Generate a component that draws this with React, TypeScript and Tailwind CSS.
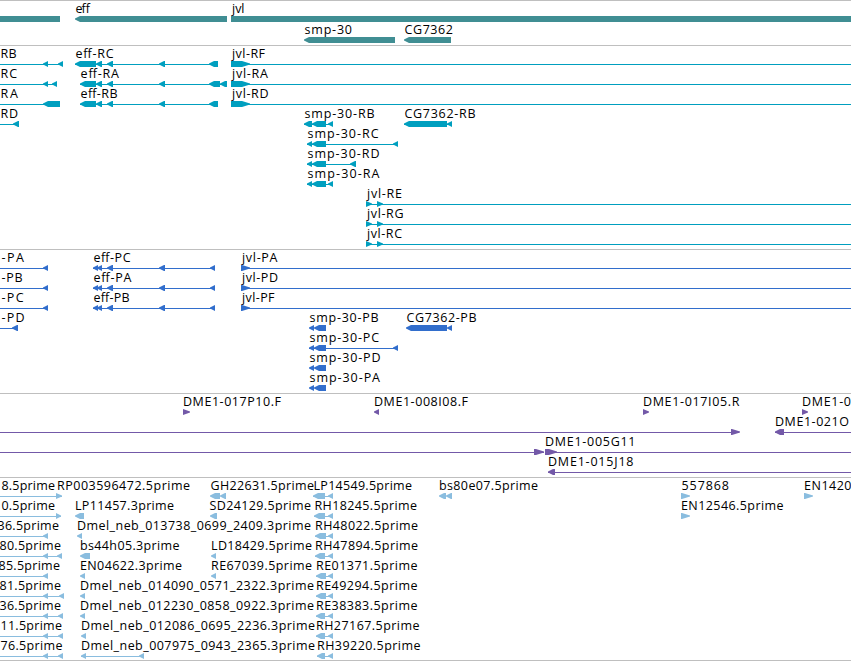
type Dir = 'l' | 'r' | '-';
type Block = [from: number, to: number, dir: Dir];
// x and end bound the drawn text
type Label = [text: string, x: number, end: number];

interface Row {
  labels: Label[];
  lines?: [number, number][];
  blocks: Block[];
}

interface Track {
  name: string;
  color: string;
  className: string;
  rowHeight: number;
  rows: Row[];
}

const WIDTH = 851;

const genes: Row[] = [
  {
    labels: [['eff', 75, 90], ['jvl', 231.5, 244.5]],
    blocks: [[0, 60, '-'], [75, 227, 'l'], [231, 851, '-']],
  },
  {
    labels: [['smp-30', 304, 352], ['CG7362', 404, 453]],
    blocks: [[304, 395, 'l'], [404, 451, 'l']],
  },
];

const effTail: Block[] = [[96, 102, 'l'], [107, 113, 'l'], [159, 165, 'l']];

const transcripts: Row[] = [
  {
    labels: [['RB', 0, 16.5], ['eff-RC', 75, 113.5], ['jvl-RF', 231.5, 265]],
    lines: [[0, 63], [75, 218], [231, WIDTH]],
    blocks: [[43, 48, 'l'], [58, 63, 'l'], [75, 96, 'l'], ...effTail, [209, 218, 'l'], [231, 250, 'r']],
  },
  {
    labels: [['RC', 0, 17], ['eff-RA', 80, 119], ['jvl-RA', 231.5, 268]],
    lines: [[0, 57], [80, 227], [231, WIDTH]],
    blocks: [[43, 48, 'l'], [52, 57, 'l'], [80, 96, 'l'], ...effTail, [209, 220, 'l'], [220, 227, 'l'], [231, 250, 'r']],
  },
  {
    labels: [['RA', 0, 18], ['eff-RB', 80, 117.5], ['jvl-RD', 231.5, 268.5]],
    lines: [[0, 60], [80, 218], [231, WIDTH]],
    blocks: [[43, 60, 'l'], [80, 96, 'l'], ...effTail, [209, 218, 'l'], [231, 250, 'r']],
  },
  {
    labels: [['RD', 0, 18], ['smp-30-RB', 304, 374.5], ['CG7362-RB', 404, 475.5]],
    lines: [[0, 19], [304, 333], [404, 452]],
    blocks: [[13, 19, 'l'], [304, 312, 'l'], [312, 326, 'l'], [328, 333, 'l'], [404, 447, 'l'], [447, 452, 'l']],
  },
  {
    labels: [['smp-30-RC', 307, 378.5]],
    lines: [[307, 398]],
    blocks: [[307, 312, 'l'], [312, 326, 'l'], [393, 398, 'l']],
  },
  {
    labels: [['smp-30-RD', 307, 379.5]],
    lines: [[307, 356]],
    blocks: [[307, 312, 'l'], [312, 326, 'l'], [350, 356, 'l']],
  },
  {
    labels: [['smp-30-RA', 307, 379.5]],
    lines: [[307, 333]],
    blocks: [[307, 312, 'l'], [312, 326, 'l'], [328, 333, 'l']],
  },
  { labels: [['jvl-RE', 366.5, 402]], lines: [[366, WIDTH]], blocks: [[366, 372, 'r'], [377, 383, 'r']] },
  { labels: [['jvl-RG', 366.5, 403.5]], lines: [[366, WIDTH]], blocks: [[366, 372, 'r'], [377, 383, 'r']] },
  { labels: [['jvl-RC', 366.5, 402]], lines: [[366, WIDTH]], blocks: [[366, 372, 'r'], [377, 383, 'r']] },
];

const effProtein: Block[] = [[93, 98, 'l'], [97, 102, 'l'], [107, 113, 'l'], [159, 165, 'l'], [210, 215, 'l']];
const smpProtein: Block[] = [[309, 314, 'l'], [314, 326, 'l']];

const proteins: Row[] = [
  {
    labels: [['-PA', 1, 24], ['eff-PC', 93, 130.5], ['jvl-PA', 241.5, 277.5]],
    lines: [[0, 48], [93, 215], [241, WIDTH]],
    blocks: [[43, 48, 'l'], ...effProtein, [241, 250, 'r']],
  },
  {
    labels: [['-PB', 1, 22.5], ['eff-PA', 93, 131.5], ['jvl-PD', 241.5, 278]],
    lines: [[0, 48], [93, 215], [241, WIDTH]],
    blocks: [[43, 48, 'l'], ...effProtein, [241, 250, 'r']],
  },
  {
    labels: [['-PC', 1, 23.5], ['eff-PB', 93, 129.5], ['jvl-PF', 241.5, 274.5]],
    lines: [[0, 48], [93, 215], [241, WIDTH]],
    blocks: [[43, 48, 'l'], ...effProtein, [241, 250, 'r']],
  },
  {
    labels: [['-PD', 1, 24.5], ['smp-30-PB', 309, 378.5], ['CG7362-PB', 406, 476.5]],
    lines: [[0, 18]],
    blocks: [[12, 18, 'l'], ...smpProtein, [406, 447, 'l'], [447, 452, 'l']],
  },
  { labels: [['smp-30-PC', 309, 379]], lines: [[309, 398]], blocks: [...smpProtein, [393, 398, 'l']] },
  { labels: [['smp-30-PD', 309, 380.5]], blocks: smpProtein },
  { labels: [['smp-30-PA', 309, 380]], blocks: smpProtein },
];

const clones: Row[] = [
  {
    labels: [['DME1-017P10.F', 182.5, 281], ['DME1-008I08.F', 373.5, 468], ['DME1-017I05.R', 642.5, 739.5], ['DME1-0', 801.5, 851]],
    blocks: [[183, 190, 'r'], [374, 379, 'l'], [643, 649, 'r'], [802, 808, 'r']],
  },
  {
    labels: [['DME1-021O', 774.5, 849]],
    lines: [[0, 739], [775, WIDTH]],
    blocks: [[731, 740, 'r'], [775, 784, 'l']],
  },
  {
    labels: [['DME1-005G11', 544.5, 635.5]],
    lines: [[0, 544], [545, WIDTH]],
    blocks: [[534, 544, 'r'], [545, 557, 'r']],
  },
  { labels: [['DME1-015J18', 547.5, 633.5]], lines: [[548, WIDTH]], blocks: [[548, 555, 'l']] },
];

const ests: Row[] = [
  {
    labels: [
      ['8.5prime', 1, 55], ['RP003596472.5prime', 56.5, 190], ['GH22631.5prime', 210, 314],
      ['LP14549.5prime', 313, 412], ['bs80e07.5prime', 438.5, 538], ['557868', 681, 729], ['EN1420', 803.5, 851.5],
    ],
    lines: [[0, 62], [313, 333]],
    blocks: [
      [56, 62, 'r'], [210, 220, 'l'], [220, 226, 'l'], [313, 325, 'l'], [328, 333, 'l'],
      [439, 446, 'l'], [446, 452, 'l'], [681, 690, 'r'], [804, 813, 'r'],
    ],
  },
  {
    labels: [['0.5prime', 1, 55], ['LP11457.3prime', 74.5, 174], ['SD24129.5prime', 209, 311], ['RH18245.5prime', 314, 417], ['EN12546.5prime', 680.5, 783.5]],
    lines: [[0, 61], [314, 333]],
    blocks: [[56, 61, 'r'], [75, 84, 'l'], [210, 217, 'l'], [314, 325, 'l'], [328, 333, 'l'], [681, 690, 'r']],
  },
  {
    labels: [['36.5prime', -3, 59], ['Dmel_neb_013738_0699_2409.3prime', 76.5, 311], ['RH48022.5prime', 314.5, 418]],
    lines: [[0, 48], [315, 333]],
    blocks: [[43, 48, 'l'], [77, 82, 'l'], [315, 326, 'l'], [328, 333, 'l']],
  },
  {
    labels: [['80.5prime', -1, 61], ['bs44h05.3prime', 79.5, 179.5], ['LD18429.5prime', 210.5, 312], ['RH47894.5prime', 314.5, 418]],
    lines: [[0, 62], [315, 333]],
    blocks: [[43, 48, 'l'], [57, 62, 'l'], [80, 90, 'l'], [211, 216, 'l'], [315, 325, 'l'], [328, 333, 'l']],
  },
  {
    labels: [['85.5prime', -2, 60], ['EN04622.3prime', 79.5, 182], ['RE67039.5prime', 210.5, 312], ['RE01371.5prime', 315.5, 417.5]],
    lines: [[0, 48], [316, 333]],
    blocks: [[43, 48, 'l'], [80, 85, 'l'], [211, 216, 'l'], [316, 326, 'l'], [328, 333, 'l']],
  },
  {
    labels: [['81.5prime', -1, 61], ['Dmel_neb_014090_0571_2322.3prime', 79.5, 314], ['RE49294.5prime', 315.5, 417.5]],
    lines: [[0, 64], [316, 333]],
    blocks: [[43, 48, 'l'], [59, 64, 'l'], [80, 85, 'l'], [316, 326, 'l'], [328, 333, 'l']],
  },
  {
    labels: [['36.5prime', -1, 61], ['Dmel_neb_012230_0858_0922.3prime', 79.5, 314], ['RE38383.5prime', 315.5, 417.5]],
    lines: [[0, 63], [316, 333]],
    blocks: [[43, 48, 'l'], [58, 63, 'l'], [80, 85, 'l'], [316, 325, 'l'], [328, 333, 'l']],
  },
  {
    labels: [['11.5prime', 0, 62], ['Dmel_neb_012086_0695_2236.3prime', 80.5, 315], ['RH27167.5prime', 315.5, 419.5]],
    lines: [[0, 63], [316, 333]],
    blocks: [[43, 48, 'l'], [58, 63, 'l'], [81, 86, 'l'], [316, 325, 'l'], [328, 333, 'l']],
  },
  {
    labels: [['76.5prime', 0, 62.5], ['Dmel_neb_007975_0943_2365.3prime', 80.5, 315], ['RH39220.5prime', 316.5, 420.5]],
    lines: [[0, 63], [81, 144], [317, 333]],
    blocks: [[43, 48, 'l'], [58, 63, 'l'], [81, 86, 'l'], [139, 144, 'l'], [317, 325, 'l'], [328, 333, 'l']],
  },
];

const tracks: Track[] = [
  { name: 'genes', color: '#408e93', className: 'pb-px', rowHeight: 21, rows: genes },
  { name: 'transcripts', color: '#009fbf', className: 'pb-0.5', rowHeight: 20, rows: transcripts },
  { name: 'proteins', color: '#326ecc', className: 'pb-0.5', rowHeight: 20, rows: proteins },
  { name: 'clones', color: '#7359a8', className: 'pb-0.5', rowHeight: 20, rows: clones },
  { name: 'ests', color: '#8abddf', className: 'border-b pb-px', rowHeight: 20, rows: ests },
];

function blockPoints([a, b, dir]: Block) {
  const head = Math.min(dir === 'r' ? 8 : 5, b - a);
  if (dir === 'l') return `${a},16.5 ${a + head},14 ${b},14 ${b},20 ${a + head},20 ${a},17.5`;
  if (dir === 'r') return `${a},14 ${b - head},14 ${b},16.5 ${b},17.5 ${b - head},20 ${a},20`;
  return `${a},14 ${b},14 ${b},20 ${a},20`;
}

function FeatureRow({ row, height }: { row: Row; height: number }) {
  return (
    <svg width={WIDTH} height={height} className="block shrink-0 overflow-visible">
      {row.lines?.map(([a, b]) => (
        <rect key={a} x={a} y={17} width={b - a} height={1} fill="currentColor" />
      ))}
      {row.blocks.map((block) => (
        <polygon key={block[0]} points={blockPoints(block)} fill="currentColor" />
      ))}
      {row.labels.map(([text, x, end]) => (
        <text key={x} x={x + 0.5} y={11} textLength={end - x - 0.5} className="fill-black">{text}</text>
      ))}
    </svg>
  );
}

export default function App() {
  return (
    <main className="flex w-[851px] flex-col overflow-x-clip bg-white font-['Open_Sans','Noto_Sans',sans-serif] text-[12.5px]">
      {tracks.map((track) => (
        <section
          key={track.name}
          className={`flex flex-col border-t border-[#bfbfbf] pt-px ${track.className}`}
          style={{ color: track.color }}
        >
          {track.rows.map((row, i) => (
            <FeatureRow key={i} row={row} height={track.rowHeight} />
          ))}
        </section>
      ))}
    </main>
  );
}
